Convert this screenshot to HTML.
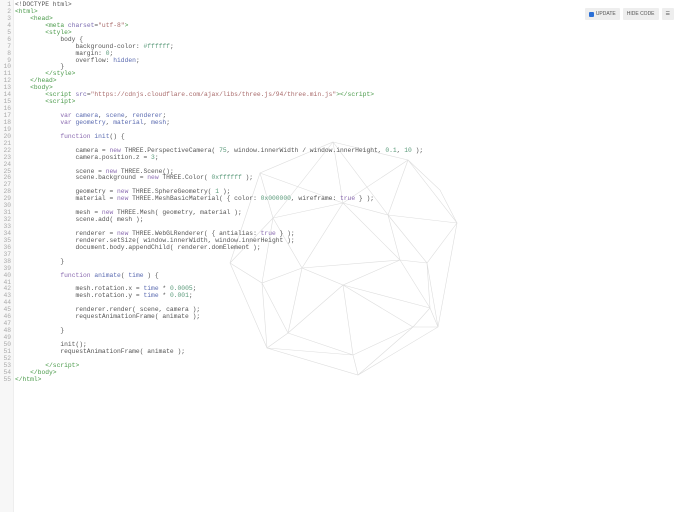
<!DOCTYPE html>
<html><head><meta charset="utf-8"><style>
body{margin:0;width:688px;height:512px;overflow:hidden;background:#fff;position:relative;font-family:"Liberation Mono",monospace;}
.g{position:absolute;left:0;top:0;width:13px;height:512px;background:#f7f7f7;border-right:1px solid #eee;}
.code{position:absolute;left:0;top:2px;font-size:6.3px;line-height:6.94px;color:#555;white-space:pre;}
.ln{display:inline-block;width:11px;text-align:right;color:#aaa;margin-right:4px;}
.t{color:#4a9a4a}.k{color:#8a6ab0}.s{color:#a86a6a}.n{color:#5a9a7a}.v{color:#5a6ab0}.a{color:#7a6ab0}
svg{position:absolute;left:0;top:0}
.btns{position:absolute;top:8px;right:14px;display:flex;gap:3px;font-family:"Liberation Sans",sans-serif;font-size:5px;color:#555}
.b{background:#eee;height:12px;line-height:12px;padding:0 4px;border-radius:1px;display:flex;align-items:center}
</style></head><body>
<div class="g"></div>
<svg width="688" height="512"><g fill="none" stroke="#ddd" stroke-width="0.6">
<polygon points="333,142 408,160 457,223 438,327 358,375 267,348 230,263 260,173"/>
<path d="M333,142 L343,203 L408,160 M343,203 L260,173 M333,142 L273,218 L260,173 M273,218 L230,263 M273,218 L343,203 M343,203 L388,215 L408,160 M388,215 L457,223 M388,215 L427,263 L457,223 M427,263 L438,327 M427,263 L400,260 L388,215 M400,260 L343,203 M400,260 L343,285 L302,268 L273,218 M302,268 L343,203 M302,268 L262,283 L230,263 M262,283 L273,218 M262,283 L288,333 L267,348 M288,333 L302,268 M288,333 L343,285 M288,333 L353,355 L358,375 M353,355 L343,285 M353,355 L413,327 L438,327 M413,327 L343,285 M413,327 L430,308 L427,263 M430,308 L400,260 M430,308 L438,327 M343,285 L430,308 M262,283 L267,348 M353,355 L267,348 M413,327 L358,375 M333,142 L388,215 M408,160 L440,190 L457,223 M302,268 L400,260"/>
</g></svg>
<div class="code"><span class="ln">1</span>&lt;!DOCTYPE html&gt;
<span class="ln">2</span><span class="t">&lt;html&gt;</span>
<span class="ln">3</span>    <span class="t">&lt;head&gt;</span>
<span class="ln">4</span>        <span class="t">&lt;meta</span> <span class="a">charset</span>=<span class="s">"utf-8"</span><span class="t">&gt;</span>
<span class="ln">5</span>        <span class="t">&lt;style&gt;</span>
<span class="ln">6</span>            body {
<span class="ln">7</span>                background-color: <span class="n">#ffffff</span>;
<span class="ln">8</span>                margin: <span class="n">0</span>;
<span class="ln">9</span>                overflow: <span class="v">hidden</span>;
<span class="ln">10</span>            }
<span class="ln">11</span>        <span class="t">&lt;/style&gt;</span>
<span class="ln">12</span>    <span class="t">&lt;/head&gt;</span>
<span class="ln">13</span>    <span class="t">&lt;body&gt;</span>
<span class="ln">14</span>        <span class="t">&lt;script</span> <span class="a">src</span>=<span class="s">"https://cdnjs.cloudflare.com/ajax/libs/three.js/94/three.min.js"</span><span class="t">&gt;&lt;/script&gt;</span>
<span class="ln">15</span>        <span class="t">&lt;script&gt;</span>
<span class="ln">16</span>
<span class="ln">17</span>            <span class="k">var</span> <span class="v">camera</span>, <span class="v">scene</span>, <span class="v">renderer</span>;
<span class="ln">18</span>            <span class="k">var</span> <span class="v">geometry</span>, <span class="v">material</span>, <span class="v">mesh</span>;
<span class="ln">19</span>
<span class="ln">20</span>            <span class="k">function</span> <span class="v">init</span>() {
<span class="ln">21</span>
<span class="ln">22</span>                camera = <span class="k">new</span> THREE.PerspectiveCamera( <span class="n">75</span>, window.innerWidth / window.innerHeight, <span class="n">0.1</span>, <span class="n">10</span> );
<span class="ln">23</span>                camera.position.z = <span class="n">3</span>;
<span class="ln">24</span>
<span class="ln">25</span>                scene = <span class="k">new</span> THREE.Scene();
<span class="ln">26</span>                scene.background = <span class="k">new</span> THREE.Color( <span class="n">0xffffff</span> );
<span class="ln">27</span>
<span class="ln">28</span>                geometry = <span class="k">new</span> THREE.SphereGeometry( <span class="n">1</span> );
<span class="ln">29</span>                material = <span class="k">new</span> THREE.MeshBasicMaterial( { color: <span class="n">0x000000</span>, wireframe: <span class="k">true</span> } );
<span class="ln">30</span>
<span class="ln">31</span>                mesh = <span class="k">new</span> THREE.Mesh( geometry, material );
<span class="ln">32</span>                scene.add( mesh );
<span class="ln">33</span>
<span class="ln">34</span>                renderer = <span class="k">new</span> THREE.WebGLRenderer( { antialias: <span class="k">true</span> } );
<span class="ln">35</span>                renderer.setSize( window.innerWidth, window.innerHeight );
<span class="ln">36</span>                document.body.appendChild( renderer.domElement );
<span class="ln">37</span>
<span class="ln">38</span>            }
<span class="ln">39</span>
<span class="ln">40</span>            <span class="k">function</span> <span class="v">animate</span>( <span class="v">time</span> ) {
<span class="ln">41</span>
<span class="ln">42</span>                mesh.rotation.x = <span class="v">time</span> * <span class="n">0.0005</span>;
<span class="ln">43</span>                mesh.rotation.y = <span class="v">time</span> * <span class="n">0.001</span>;
<span class="ln">44</span>
<span class="ln">45</span>                renderer.render( scene, camera );
<span class="ln">46</span>                requestAnimationFrame( animate );
<span class="ln">47</span>
<span class="ln">48</span>            }
<span class="ln">49</span>
<span class="ln">50</span>            init();
<span class="ln">51</span>            requestAnimationFrame( animate );
<span class="ln">52</span>
<span class="ln">53</span>        <span class="t">&lt;/script&gt;</span>
<span class="ln">54</span>    <span class="t">&lt;/body&gt;</span>
<span class="ln">55</span><span class="t">&lt;/html&gt;</span></div>
<div class="btns"><div class="b"><span style="display:inline-block;width:5px;height:5px;background:#2a6fd6;margin-right:2px;border-radius:1px"></span>UPDATE</div><div class="b">HIDE CODE</div><div class="b">☰</div></div>
</body></html>
